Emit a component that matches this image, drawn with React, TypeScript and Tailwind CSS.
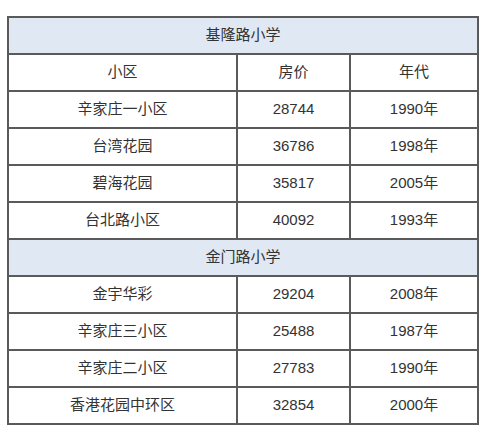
import { Fragment } from "react";

const sections = [
  {
    name: "基隆路小学",
    rows: [
      ["辛家庄一小区", "28744", "1990年"],
      ["台湾花园", "36786", "1998年"],
      ["碧海花园", "35817", "2005年"],
      ["台北路小区", "40092", "1993年"],
    ],
    head: true,
  },
  {
    name: "金门路小学",
    rows: [
      ["金宇华彩", "29204", "2008年"],
      ["辛家庄三小区", "25488", "1987年"],
      ["辛家庄二小区", "27783", "1990年"],
      ["香港花园中环区", "32854", "2000年"],
    ],
    head: false,
  },
];

const cell = "border-2 border-[#5a5a5a] text-center align-middle h-[37px] p-0";

export default function App() {
  return (
    <div className="w-[500px] h-[429px] bg-white pt-[16px] pl-[7px] text-[15px] text-[#333] font-['Liberation_Sans','Noto_Sans_CJK_SC',sans-serif]">
      <table className="border-collapse w-[470px] table-fixed">
        <colgroup>
          <col className="w-[229px]" />
          <col className="w-[113px]" />
          <col className="w-[128px]" />
        </colgroup>
        <tbody>
          {sections.map((s) => (
            <Fragment key={s.name}>
              <tr>
                <td colSpan={3} className={`${cell} bg-[#dfe8f3]`}>
                  {s.name}
                </td>
              </tr>
              {s.head && (
                <tr>
                  <td className={cell}>小区</td>
                  <td className={cell}>房价</td>
                  <td className={cell}>年代</td>
                </tr>
              )}
              {s.rows.map((r) => (
                <tr key={r[0]}>
                  <td className={cell}>{r[0]}</td>
                  <td className={cell}>{r[1]}</td>
                  <td className={cell}>{r[2]}</td>
                </tr>
              ))}
            </Fragment>
          ))}
        </tbody>
      </table>
    </div>
  );
}
